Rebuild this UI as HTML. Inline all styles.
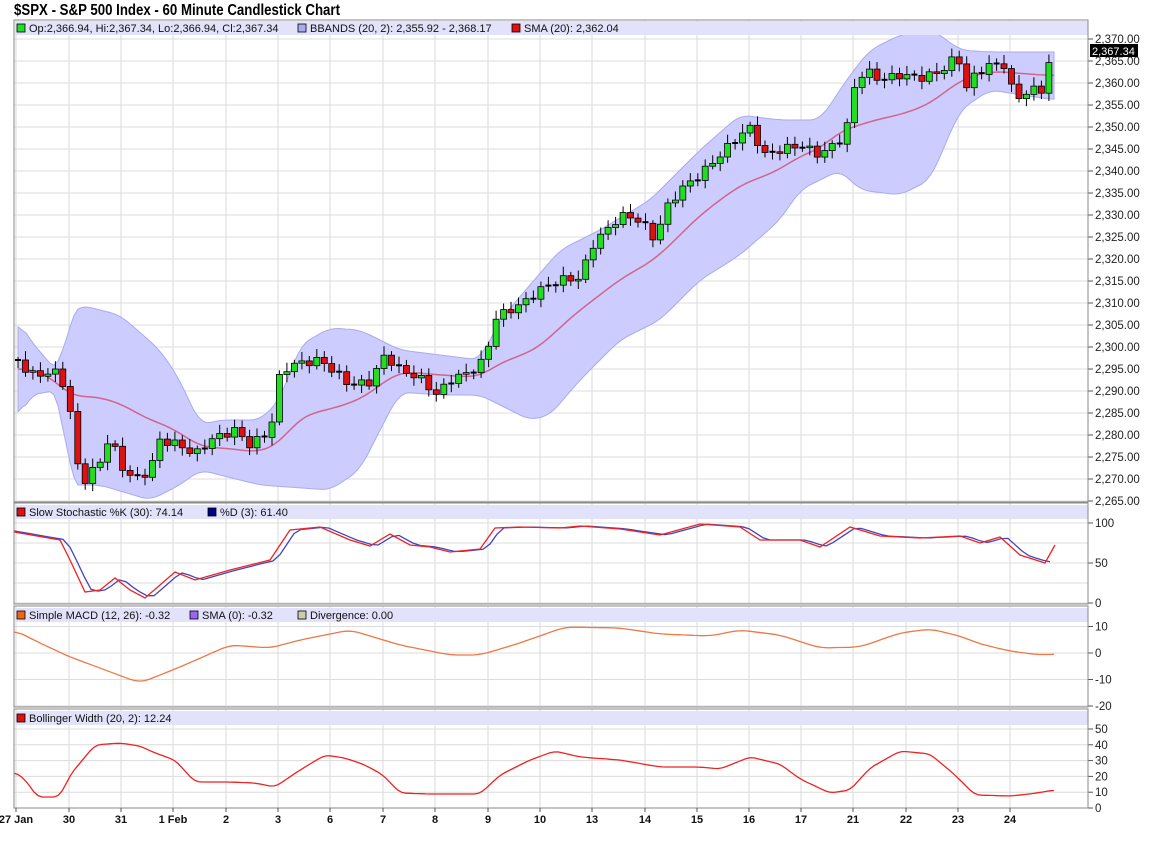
<!DOCTYPE html>
<html><head><meta charset="utf-8"><style>
body{margin:0;background:#fff;width:1152px;height:847px;overflow:hidden}
svg{display:block;font-family:"Liberation Sans",sans-serif}
</style></head><body>
<div id="wrap"></div>
<script>
(function(){
var h='';
function add(x){h+=x;}
var L=14,R=1088;
var dates=[[16,'27 Jan'],[69,'30'],[121,'31'],[173,'1 Feb'],[226,'2'],[278,'3'],[330,'6'],[383,'7'],[435,'8'],[488,'9'],[540,'10'],[592,'13'],[645,'14'],[697,'15'],[749,'16'],[801,'17'],[853,'21'],[906,'22'],[958,'23'],[1010,'24']];
var panels=[[20,502],[503,604],[606,707],[709,808]];
panels.forEach(function(p){dates.forEach(function(d){add('<line x1="'+d[0]+'" x2="'+d[0]+'" y1="'+p[0]+'" y2="'+p[1]+'" stroke="#d8d8d8"/>');});});
function hl(y){add('<line x1="'+L+'" x2="'+R+'" y1="'+y+'" y2="'+y+'" stroke="#dcdcdc"/>');}
function yp(p){return 39+(2370-p)*4.4;}
for(var pp=2265;pp<=2370;pp+=5){var yy=yp(pp);hl(yy);add('<line x1="'+R+'" x2="'+(R+5)+'" y1="'+yy+'" y2="'+yy+'" stroke="#555"/>');add('<text x="'+(R+7)+'" y="'+(yy+4)+'" font-size="11.5" fill="#222">'+(pp+'').replace(/^(\d)/,'$1,')+'.00</text>');}
function ax(vals,f){vals.forEach(function(v){var y=f(v);hl(y);add('<line x1="'+R+'" x2="'+(R+5)+'" y1="'+y+'" y2="'+y+'" stroke="#555"/>');add('<text x="'+(R+7)+'" y="'+(y+4)+'" font-size="11.5" fill="#222">'+v+'</text>');});}
ax([100,50,0],function(v){return 603-v*0.8;});
hl(603-75*0.8);hl(603-25*0.8);
ax([10,0,-10,-20],function(v){return 653-v*2.65;});
ax([50,40,30,20,10,0],function(v){return 808-v*1.58;});
function interp(pts,x){for(var i=0;i<pts.length-1;i++){if(x<=pts[i+1][0]){var a=pts[i],b=pts[i+1];return a[1]+(b[1]-a[1])*(x-a[0])/(b[0]-a[0]);}}return pts[pts.length-1][1];}
function poly(pts){return pts.map(function(p){return p[0]+','+p[1];}).join(' ');}
function smooth(pts,x0,x1,st,win){var raw=[];for(var x=x0;x<=x1;x+=st)raw.push([x,interp(pts,x)]);var out=[];for(var i=0;i<raw.length;i++){var s=0,n=0;for(var j=i-win;j<=i+win;j++){if(j>=0&&j<raw.length){s+=raw[j][1];n++;}}out.push([raw[i][0],(s/n).toFixed(1)]);}return out;}
var up=[[18,320],[30,340],[60,375],[70,315],[80,305],[120,315],[160,350],[180,380],[200,425],[220,420],[260,420],[280,400],[300,345],[330,328],[360,330],[400,350],[440,355],[480,360],[500,320],[560,250],[600,230],[650,200],[700,150],[740,115],[780,120],[820,120],[850,75],[870,50],[900,35],[930,28],[960,50],[990,52],[1055,52]];
var lo=[[18,420],[30,395],[60,390],[70,485],[100,485],[150,500],[180,485],[200,470],[260,485],[330,490],[360,470],[380,430],[400,392],[440,395],[480,395],[500,405],[530,420],[550,415],[580,380],[600,360],[620,340],[660,320],[700,280],[740,255],[780,220],[800,190],[840,170],[860,190],[900,195],[930,180],[960,110],[990,90],[1055,100]];
var su=smooth(up,18,1055,4,2),sl=smooth(lo,18,1055,4,2);
add('<polygon points="'+poly(su)+' '+poly(sl.slice().reverse())+'" fill="#ccccff" stroke="#aaaaee"/>');
var sma=[];for(var i0=0;i0<su.length;i0++){sma.push([su[i0][0],((+su[i0][1]+ +sl[i0][1])/2).toFixed(1)]);}
var sm2=smooth(sma.map(function(p){return [p[0],+p[1]];}),18,1055,4,3);
add('<polyline points="'+poly(sm2)+'" fill="none" stroke="#d06688" stroke-width="1.5"/>');
var cl=[[18,360],[30,375],[60,372],[70,410],[75,460],[85,480],[100,462],[110,435],[120,465],[135,480],[150,470],[160,440],[180,445],[195,455],[210,440],[235,430],[250,445],[270,432],[280,375],[290,365],[320,360],[335,372],[350,385],[370,382],[385,355],[400,370],[420,378],[437,395],[450,380],[470,372],[485,360],[495,318],[510,310],[525,302],[540,290],[560,280],[580,278],[595,240],[610,228],[620,215],[640,220],[655,240],[665,210],[680,190],[700,175],[720,155],[740,135],[750,128],[765,155],[780,150],[800,145],[820,155],[840,140],[850,120],[855,85],[865,70],[880,80],[900,75],[920,78],[940,72],[958,55],[965,90],[975,75],[990,65],[1005,65],[1015,100],[1030,90],[1045,90],[1050,55]];
var prev=360;
for(var i=0;i<139;i++){var cx=18+i*7.47;var c=interp(cl,cx)+Math.sin(i*2.3)*4;var o=prev;prev=c;
var tp=Math.min(o,c),bt=Math.max(o,c);var w1=tp-3-Math.abs(Math.sin(i*1.7))*6,w2=bt+3+Math.abs(Math.cos(i*1.3))*5;
var xx=cx.toFixed(1);add('<line x1="'+xx+'" x2="'+xx+'" y1="'+w1.toFixed(1)+'" y2="'+w2.toFixed(1)+'" stroke="#000"/>');
if(bt-tp<1.5){add('<line x1="'+(cx-3).toFixed(1)+'" x2="'+(cx+3).toFixed(1)+'" y1="'+tp.toFixed(1)+'" y2="'+tp.toFixed(1)+'" stroke="#000" stroke-width="2"/>');}
else add('<rect x="'+(cx-3).toFixed(1)+'" y="'+tp.toFixed(1)+'" width="6" height="'+(bt-tp).toFixed(1)+'" fill="'+(c<o?'#22dd22':'#dd1111')+'" stroke="#000" stroke-width="0.8"/>');}
add('<rect x="1090" y="44" width="48" height="13" fill="#000"/><text x="1092" y="55" font-size="11" fill="#fff">2,367.34</text>');
var k=[[14,532],[60,540],[70,560],[85,592],[100,590],[115,578],[130,590],[145,598],[175,572],[195,580],[230,570],[270,560],[290,530],[320,527],[350,540],[370,546],[390,534],[410,545],[430,547],[450,552],[480,549],[495,528],[520,527],[560,528],[580,526],[620,529],[660,535],[700,524],[740,527],[760,540],[800,540],[820,547],[850,527],[880,536],[920,538],[960,536],[980,543],[1000,537],[1020,555],[1045,563],[1055,545]];
var dd=[];for(var x2=14;x2<=1055;x2+=7){dd.push([x2,(interp(k,x2-8)*0.6+interp(k,x2-4)*0.4).toFixed(1)]);}
add('<polyline points="'+poly(dd)+'" fill="none" stroke="#4444bb" stroke-width="1.3"/>');
add('<polyline points="'+poly(k)+'" fill="none" stroke="#ee2222" stroke-width="1.3"/>');
var m=[[14,630],[40,643],[70,657],[100,668],[140,683],[180,667],[230,645],[270,648],[300,640],[350,630],[400,645],[450,655],[480,655],[520,643],[565,627],[620,628],[660,634],[710,636],[740,630],[780,635],[820,648],[860,647],[900,633],[930,629],[960,636],[980,644],[1010,651],[1040,655],[1055,654]];
add('<polyline points="'+poly(smooth(m,14,1055,4,2))+'" fill="none" stroke="#ee7744" stroke-width="1.3"/>');
var b=[[14,772],[25,779],[37,797],[60,797],[70,775],[95,745],[120,743],[140,746],[155,753],[175,760],[195,782],[230,782],[255,783],[275,787],[300,770],[325,755],[345,758],[365,765],[383,775],[400,793],[430,794],[480,794],[500,775],[530,760],[555,751],[580,757],[620,760],[660,767],[700,767],[720,769],[750,757],[780,764],[800,779],[830,793],[850,790],[870,768],[900,751],[930,754],[955,775],[975,795],[1010,796],[1030,794],[1055,790]];
add('<polyline points="'+poly(smooth(b,14,1055,4,1))+'" fill="none" stroke="#ee2222" stroke-width="1.3"/>');
function hdr(y,items){add('<rect x="'+(L+1)+'" y="'+y+'" width="'+(R-L-1)+'" height="14" fill="#e2e2fa"/>');items.forEach(function(it){add('<rect x="'+it[0]+'" y="'+(y+3)+'" width="8" height="8" fill="'+it[1]+'" stroke="#000" stroke-width="0.8"/><text x="'+(it[0]+12)+'" y="'+(y+11)+'" font-size="11" fill="#111">'+it[2]+'</text>');});}
hdr(21,[[17,'#22dd22','Op:2,366.94, Hi:2,367.34, Lo:2,366.94, Cl:2,367.34'],[298,'#aaaaee','BBANDS (20, 2): 2,355.92 - 2,368.17'],[512,'#dd1111','SMA (20): 2,362.04']]);
hdr(505,[[17,'#dd1111','Slow Stochastic %K (30): 74.14'],[208,'#000088','%D (3): 61.40']]);
hdr(608,[[17,'#ee6611','Simple MACD (12, 26): -0.32'],[190,'#9966ee','SMA (0): -0.32'],[298,'#ccccaa','Divergence: 0.00']]);
hdr(711,[[17,'#dd1111','Bollinger Width (20, 2): 12.24']]);
panels.forEach(function(p){add('<rect x="'+L+'" y="'+p[0]+'" width="'+(R-L)+'" height="'+(p[1]-p[0])+'" fill="none" stroke="#888"/>');});
dates.forEach(function(d){add('<line x1="'+d[0]+'" x2="'+d[0]+'" y1="808" y2="812" stroke="#555"/><text x="'+d[0]+'" y="823" font-size="11" font-weight="bold" text-anchor="middle" fill="#111">'+d[1]+'</text>');});
document.getElementById('wrap').innerHTML='<svg width="1152" height="847" xmlns="http://www.w3.org/2000/svg"><text x="14" y="15" font-size="16" font-weight="bold" fill="#000" textLength="326" lengthAdjust="spacingAndGlyphs">$SPX - S&amp;P 500 Index - 60 Minute Candlestick Chart</text>'+h+'</svg>';
})();
</script>
</body></html>
